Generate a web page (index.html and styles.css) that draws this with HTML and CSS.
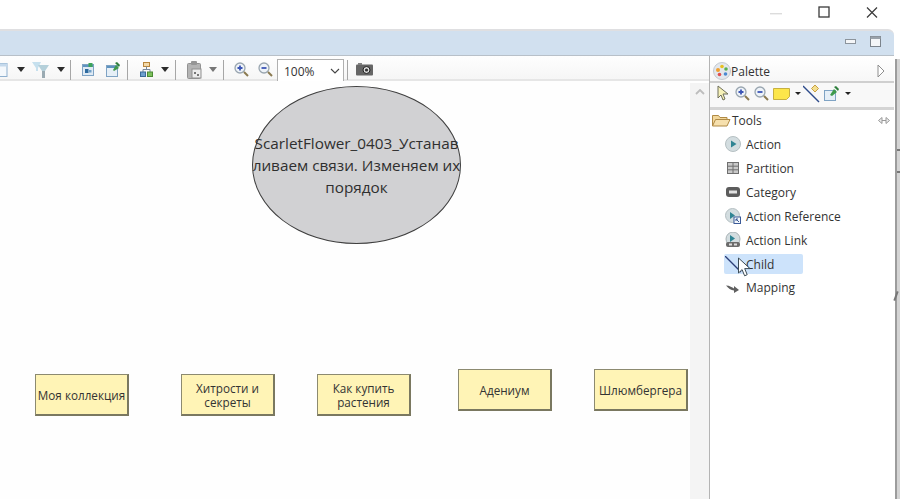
FILE: index.html
```html
<!DOCTYPE html>
<html lang="ru">
<head>
<meta charset="utf-8">
<title>ScarletFlower</title>
<link rel="stylesheet" href="styles.css">
</head>
<body>
<div class="app">
  <header class="titlebar">
    <svg class="win-min" width="12" height="2" viewBox="0 0 12 2"><rect width="12" height="1.4" fill="#dcdcdc"/></svg>
    <svg class="win-max" width="12" height="12" viewBox="0 0 12 12"><rect x="1" y="1" width="10" height="10" fill="none" stroke="#3a3a3a" stroke-width="1.3"/></svg>
    <svg class="win-close" width="12" height="12" viewBox="0 0 12 12"><path d="M1 1.500l10 10M11 1.500l-10 10" stroke="#3a3a3a" stroke-width="1.2" fill="none"/></svg>
  </header>
  <div class="shell">
    <div class="window">
      <div class="band">
        <svg class="band-min" width="12" height="6" viewBox="0 0 12 6"><rect x=".5" y=".5" width="10" height="4" fill="#f4f6f8" stroke="#8c949c"/></svg>
        <svg class="band-max" width="11" height="12" viewBox="0 0 11 12"><rect x=".5" y=".5" width="10" height="10" fill="#f4f6f8" stroke="#7c848c"/><rect x=".5" y=".5" width="10" height="2.5" fill="#9aa2aa"/></svg>
      </div>
      <div class="body-row">
        <div class="editor">
          <div class="toolbar">
            <svg width="8" height="16" viewBox="0 0 8 16"><rect x="-6" y="1.5" width="13" height="13" fill="#f4f8fc" stroke="#8fb0cf"/><rect x="-6" y="1.5" width="13" height="3" fill="#c5d9ec"/></svg>
            <svg width="8" height="5" viewBox="0 0 8 5"><path d="M0 0h8L4 5z" fill="#2c2c2c"/></svg>
            <svg width="17" height="17" viewBox="0 0 17 17"><path d="M0 1h9L6 7v3H4V7z" fill="#c6e0ee"/><path d="M6 4h11l-4 6v7h-3v-7z" fill="#b5d0da"/><path d="M10 10h3v7h-3z" fill="#9aaab2"/></svg>
            <svg width="8" height="5" viewBox="0 0 8 5"><path d="M0 0h8L4 5z" fill="#2c2c2c"/></svg>
            <i class="sep"></i>
            <svg width="12" height="13" viewBox="0 0 12 13"><rect x=".5" y="1.5" width="11" height="11" fill="#dfeaf4" stroke="#7fa3c4"/><rect x="1" y="2" width="10" height="2" fill="#5f93bf"/><rect x="6.5" y="0" width="4" height="4" fill="#3da35a"/><rect x="3" y="6" width="3.5" height="4" fill="#2d6a9f"/><rect x="7" y="7" width="2.5" height="2.5" fill="#70a0c8"/></svg>
            <svg width="14" height="15" viewBox="0 0 14 15"><rect x=".5" y="3.5" width="11" height="11" fill="#e6eff7" stroke="#7fa3c4"/><rect x="1" y="4" width="10" height="2" fill="#5f93bf"/><path d="M7 8l3-5 3 3-5 3z" fill="#3f9a4c"/><path d="M9 1l4 4 1-2-3-3z" fill="#2f7f3c"/></svg>
            <i class="sep"></i>
            <svg width="13" height="15" viewBox="0 0 13 15"><rect x="3.5" y=".5" width="6" height="4" fill="#f3d9a8" stroke="#b8863c"/><path d="M6.500 4.500v3M3 10V7.500h7V10" stroke="#7a8a9a" fill="none"/><rect x=".5" y="10" width="5" height="4.500" fill="#6da0cf" stroke="#3b6b98"/><rect x="7.500" y="10" width="5" height="4.500" fill="#7cc05c" stroke="#4b8a34"/></svg>
            <svg width="8" height="5" viewBox="0 0 8 5"><path d="M0 0h8L4 5z" fill="#2c2c2c"/></svg>
            <i class="sep"></i>
            <svg width="15" height="18" viewBox="0 0 15 18"><rect x=".5" y="2.500" width="13" height="15" rx="1" fill="#b4b4b4" stroke="#929292"/><rect x="4" y="0" width="6" height="4" rx="1" fill="#969696"/><rect x="5" y="8" width="9" height="9" fill="#ececec" stroke="#8f8f8f"/><path d="M7 11h2v2H7zM10 13h2v2h-2z" fill="#777"/></svg>
            <svg width="8" height="5" viewBox="0 0 8 5"><path d="M0 0h8L4 5z" fill="#777"/></svg>
            <i class="sep"></i>
            <svg width="15" height="15" viewBox="0 0 15 15"><circle cx="6" cy="6" r="5" fill="#eef3f8" stroke="#9aa6b0" stroke-width="1.300"/><path d="M3.500 6h5M6 3.500v5" stroke="#3b55b5" stroke-width="1.800"/><path d="M10 10l4 4" stroke="#8a7a50" stroke-width="2"/></svg>
            <svg width="15" height="15" viewBox="0 0 15 15"><circle cx="6" cy="6" r="5" fill="#eef3f8" stroke="#9aa6b0" stroke-width="1.300"/><path d="M3.500 6h5" stroke="#3b55b5" stroke-width="1.800"/><path d="M10 10l4 4" stroke="#8a7a50" stroke-width="2"/></svg>
            <div class="combo"><span>100%</span><svg width="10" height="6" viewBox="0 0 10 6"><path d="M1 1l4 4 4-4" fill="none" stroke="#444" stroke-width="1.100"/></svg></div>
            <i class="sep"></i>
            <svg width="18" height="13" viewBox="0 0 18 13"><rect x="0" y="1.500" width="17" height="11" rx="1" fill="#666"/><rect x="2" y="0" width="4" height="2" fill="#808080"/><circle cx="10.500" cy="7" r="3.500" fill="#ddd" stroke="#222"/><circle cx="10.500" cy="7" r="1.600" fill="#333"/></svg>
          </div>
          <div class="canvas-row">
            <div class="canvas">
              <div class="ellipse"><p>ScarletFlower_0403_Устанавливаем связи. Изменяем их порядок</p></div>
              <div class="node n1">Моя коллекция</div>
              <div class="node n2">Хитрости и секреты</div>
              <div class="node n3">Как купить растения</div>
              <div class="node n4">Адениум</div>
              <div class="node n5">Шлюмбергера</div>
            </div>
            <div class="scrollbar"><svg width="10" height="6" viewBox="0 0 10 6"><path d="M1 5l4-4 4 4" fill="none" stroke="#bdbdbd" stroke-width="1.800"/></svg></div>
          </div>
        </div>
        <aside class="palette">
          <div class="pal-head">
            <svg width="18" height="18" viewBox="0 0 18 18"><circle cx="9" cy="9" r="8.500" fill="#e3e7ec" stroke="#c3c9d0"/><circle cx="5" cy="8" r="2" fill="#f0a030"/><circle cx="9" cy="4.500" r="1.800" fill="#e8c020"/><circle cx="13" cy="7" r="1.800" fill="#58b050"/><circle cx="12.500" cy="12" r="1.800" fill="#4a88d0"/><circle cx="6.500" cy="12.500" r="1.800" fill="#e05050"/></svg>
            <span class="pal-title">Palette</span>
            <svg class="pal-arrow" width="8" height="14" viewBox="0 0 8 14"><path d="M1 1l6 6-6 6z" fill="#fff" stroke="#8e8e8e"/></svg>
          </div>
          <div class="pal-tools">
            <svg width="12" height="17" viewBox="0 0 12 17"><path d="M1 1v12l3-3 2 5 2-1-2-5h5z" fill="#f7f2b8" stroke="#6e6e5a"/></svg>
            <svg width="15" height="15" viewBox="0 0 15 15"><circle cx="6" cy="6" r="5" fill="#eef3f8" stroke="#9aa6b0" stroke-width="1.300"/><path d="M3.500 6h5M6 3.500v5" stroke="#3b55b5" stroke-width="1.800"/><path d="M10 10l4 4" stroke="#8a7a50" stroke-width="2"/></svg>
            <svg width="15" height="15" viewBox="0 0 15 15"><circle cx="6" cy="6" r="5" fill="#eef3f8" stroke="#9aa6b0" stroke-width="1.300"/><path d="M3.500 6h5" stroke="#3b55b5" stroke-width="1.800"/><path d="M10 10l4 4" stroke="#8a7a50" stroke-width="2"/></svg>
            <svg width="17" height="12" viewBox="0 0 17 12"><path d="M.5.500h16v8l-3 3H.5z" fill="#fce64a" stroke="#c7b040"/></svg>
            <svg width="6" height="3" viewBox="0 0 6 3"><path d="M0 0h6L3 3z" fill="#222"/></svg>
            <svg width="17" height="18" viewBox="0 0 17 18"><path d="M0 1l16 16" stroke="#2c4a8a" stroke-width="1.400"/><path d="M12 0l3.500 3.500L12 7 8.500 3.500z" fill="#f3df90" stroke="#c8a040"/></svg>
            <svg width="15" height="15" viewBox="0 0 15 15"><rect x=".5" y="4.500" width="11" height="10" fill="#e6eff7" stroke="#7fa3c4"/><path d="M6 9l4-6 3 3-5 4z" fill="#3f9a4c"/><path d="M10 1l4 4 1-2-3-3z" fill="#2f7f3c"/></svg>
            <svg width="6" height="3" viewBox="0 0 6 3"><path d="M0 0h6L3 3z" fill="#222"/></svg>
          </div>
          <div class="drawer">
            <svg width="19" height="13" viewBox="0 0 19 13"><path d="M.5 12V1.500h6l1.500 2h7V6" fill="#f2d79a" stroke="#b08a45"/><path d="M.5 12l3-6.500H18L15 12z" fill="#f6e0ae" stroke="#b08a45"/></svg>
            <span>Tools</span>
            <svg width="12" height="7" viewBox="0 0 12 7"><path d="M4 .5L.5 3.500 4 6.500zM8 .5l3.500 3L8 6.500z" fill="#eee" stroke="#999"/><path d="M4 3.500h4" stroke="#999"/></svg>
          </div>
          <ul class="tools">
            <li><svg width="16" height="16" viewBox="0 0 16 16"><circle cx="8" cy="8" r="7.500" fill="#d3dde0" stroke="#b5bfc2"/><path d="M6 4.500L11.500 8 6 11.500z" fill="#2f8493"/></svg>Action</li>
            <li><svg width="16" height="16" viewBox="0 0 16 16"><rect x="2.500" y="2.500" width="11" height="11" fill="#c9c9c9" stroke="#6f6f6f"/><path d="M2.500 6.200h11M2.500 9.800h11M8 2.500v11" stroke="#6f6f6f"/></svg>Partition</li>
            <li><svg width="16" height="16" viewBox="0 0 16 16"><rect x="1" y="3" width="14" height="10" rx="3" fill="#5c5c5c"/><rect x="4" y="6.500" width="8" height="3" fill="#e2e2e2"/></svg>Category</li>
            <li><svg width="16" height="16" viewBox="0 0 16 16"><circle cx="7.500" cy="7.500" r="7" fill="#d3dde0" stroke="#b5bfc2"/><path d="M5 4l5 3.500L5 11z" fill="#2f8493"/><rect x="9" y="9" width="6.500" height="6.500" fill="#f2f6fa" stroke="#3b5a98"/><path d="M14 14l-3-3M11 13v-2h2" stroke="#3b5a98" fill="none"/></svg>Action Reference</li>
            <li><svg width="16" height="16" viewBox="0 0 16 16"><circle cx="8" cy="7" r="7" fill="#d3dde0" stroke="#a8b2b5"/><path d="M5 3l5 3.500L5 10z" fill="#2f8493"/><rect x="1" y="10" width="14" height="5" rx="2" fill="#6b6b6b"/><rect x="4" y="11.500" width="3" height="2" fill="#ddd"/><rect x="9" y="11.500" width="3" height="2" fill="#ddd"/></svg>Action Link</li>
            <li class="selected"><svg width="17" height="17" viewBox="0 0 17 17"><path d="M0 0l16 16" stroke="#2c3f78" stroke-width="1.300"/></svg>Child</li>
            <li class="last"><svg width="16" height="16" viewBox="0 0 16 16"><path d="M1 5.500c4 0 6 2 8 3V6l5 4-5 3v-2.500C6 10.500 3 8 1 5.500z" fill="#5f5f5f"/></svg>Mapping</li>
          </ul>
          <svg class="cursor" width="15" height="21" viewBox="0 0 15 21"><path d="M1.500 1v15l3.600-3.400 2.500 6.200 2.600-1.100-2.500-6.100h5.300z" fill="#fff" stroke="#3c4b55" stroke-width="1"/></svg>
        </aside>
      </div>
    </div>
    <div class="edge">
      <i class="mark m1"></i>
      <i class="mark m2"></i>
      <i class="mark m3"></i>
    </div>
  </div>
</div>
</body>
</html>
```

FILE: styles.css
```css
* { box-sizing: border-box; }
html, body { margin: 0; height: 100%; background: #fff; overflow: hidden; }
body { font-family: "Open Sans", "Noto Sans", sans-serif; color: #333; }
.app { width: 900px; height: 499px; display: flex; flex-direction: column; }

/* OS title bar */
.titlebar { height: 29px; flex: none; display: flex; align-items: center; padding: 0 0 5px 770px; background: #fff; }
.win-min { margin: 3px 36px 0 0; }
.win-max { margin-right: 36px; }

.shell { flex: 1; display: flex; min-height: 0; }
.window { width: 894px; flex: none; display: flex; flex-direction: column; }
.edge { position: relative; width: 5px; margin: 30px 0 0 1px; background: #d4d4d4; border-left: 2px solid #9c9c9c; }
.mark { position: absolute; left: 0; width: 3px; background: #777; }
.m1 { top: 90px; height: 2px; }
.m2 { top: 112px; height: 2px; }
.m3 { top: 232px; height: 10px; left: -2px; width: 2px; transform: rotate(20deg); }

/* Blue band */
.band { height: 27px; flex: none; display: flex; align-items: center; padding: 0 0 2px 845px; background: #d1e0ef; border-top: 2px solid #dfdfe1; border-bottom: 1px solid #b8c0c8; border-top-right-radius: 6px; }
.band-min { margin-right: 13px; }

.body-row { flex: 1; display: flex; min-height: 0; }

/* Editor */
.editor { width: 710px; flex: none; display: flex; flex-direction: column; border-right: 1px solid #b4b4b4; }
.toolbar { height: 25px; flex: none; padding-top: 4px; display: grid; grid-template-rows: 19px; grid-template-columns: 17px 15px 25px 13px 12px 24px 21px 13px 21px 14px 12px 22px 14px 11px 24px 19px 70px 9px auto; align-items: center; background: linear-gradient(#fefefe, #f6f6f6); border-bottom: 2px solid #e6e6e6; }
.sep { display: block; width: 1px; height: 20px; background: #a6a6a6; }
.combo { height: 23px; width: 67px; align-self: start; margin-top: -1px; display: flex; align-items: center; justify-content: space-between; padding: 0 3px 0 6px; background: #fff; border: 1px solid #b0b0b0; border-bottom: 0; font-size: 12px; color: #333; }

.canvas-row { flex: 1; display: flex; min-height: 0; }
.canvas { flex: 1; position: relative; background: #fefefe; overflow: hidden; }
.scrollbar { width: 19px; flex: none; margin-top: 2px; padding-top: 6px; background: #f4f4f4; display: flex; justify-content: center; align-items: flex-start; }

.ellipse { position: absolute; left: 252px; top: 5px; width: 209px; height: 158px; border-radius: 50%; border: 1px solid #3f3f3f; background: #d1d1d3; display: flex; align-items: center; justify-content: center; }
.ellipse p { margin: 0; width: 209px; flex: none; font-size: 15.3px; line-height: 22px; text-align: center; overflow-wrap: anywhere; color: #2f2f2f; }

.node { position: absolute; width: 94px; height: 42px; display: flex; align-items: center; justify-content: center; text-align: center; font-size: 11.7px; line-height: 14px; color: #333; background: #fff4b6; border: 1px solid #8c8a70; border-right: 2px solid #7a7860; border-bottom: 2px solid #7a7860; }
.n1 { left: 35px; top: 293px; }
.n2 { left: 181px; top: 293px; }
.n3 { left: 317px; top: 293px; }
.n4 { left: 458px; top: 288px; }
.n5 { left: 594px; top: 288px; }

/* Palette */
.palette { flex: 1; position: relative; background: #fff; font-size: 12px; color: #333; }
.pal-head { height: 27px; display: flex; align-items: center; padding: 5px 9px 0 3px; background: linear-gradient(#fff, #f7f7f7); border-bottom: 2px solid #cfcfcf; }
.pal-title { flex: 1; }
.pal-tools { height: 27px; display: grid; grid-template-columns: 18px 19px 19px 22px 8px 21px 21px auto; align-items: center; padding: 0 0 3px 7px; background: #f8f8f8; border-bottom: 3px solid #d4d4d4; }
.drawer { height: 21px; display: flex; align-items: center; padding: 0 4px 0 2px; gap: 1px; }
.drawer span { flex: 1; }
.tools { list-style: none; margin: 1px 0 0; padding: 0 0 0 14px; }
.tools li { height: 24px; display: flex; align-items: center; gap: 5px; padding-left: 1px; white-space: nowrap; border-radius: 2px; }
.tools svg { flex: none; }
.tools .selected { height: 20px; width: 79px; margin: 2px 0; background: #cde3fb; gap: 4px; }
.tools .last { height: 23px; }
.cursor { position: absolute; left: 27px; top: 201px; }
```
